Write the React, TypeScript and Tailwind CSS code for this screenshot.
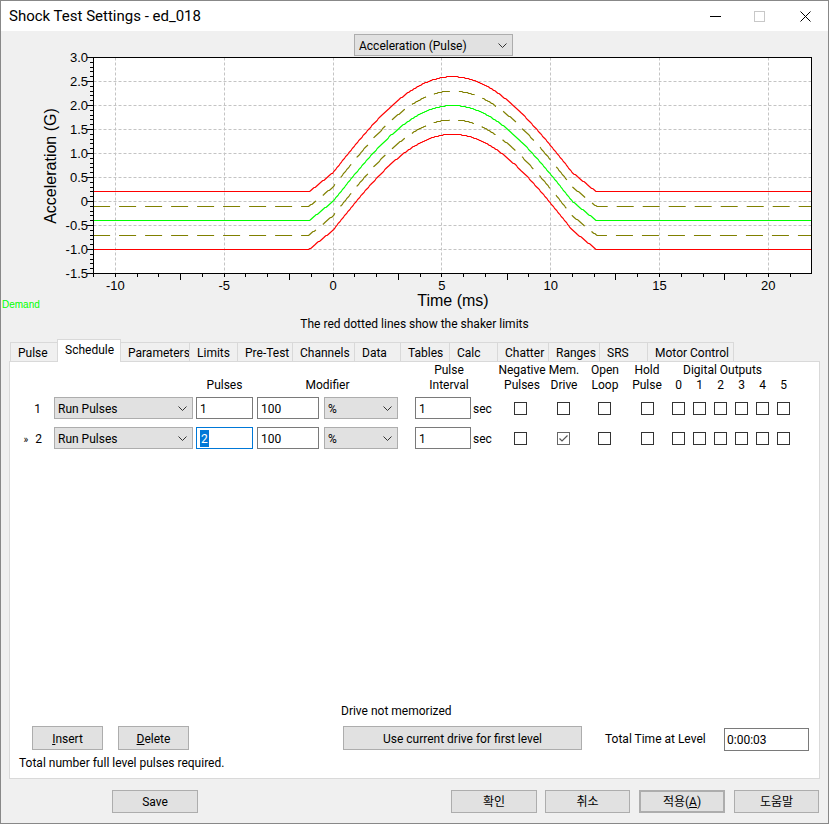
import React from 'react';

// chart geometry, in page pixels
const X = (t: number) => 333 + 21.767 * t;
const Y = (g: number) => 201.5 - 48 * g;
const snap = (v: number) => Math.round(v - 0.5) + 0.5;
const T0 = -11.02;
const T1 = 21.98;

const demand = (t: number) => {
  if (t <= -1.1) return -0.4;
  if (t < 0) return -0.4 + (0.4 * (t + 1.1)) / 1.1;
  if (t <= 11) return 2 * Math.sin((Math.PI * t) / 11);
  if (t < 12.1) return -(0.4 * (t - 11)) / 1.1;
  return -0.4;
};

const curve = (off: number) => {
  const pts: string[] = [];
  for (let t = T0; t <= T1 + 0.001; t += 0.05) {
    pts.push(`${X(t).toFixed(1)},${snap(Y(demand(t) + off))}`);
  }
  return 'M' + pts.join(' L');
};

const yTicks = [3, 2.5, 2, 1.5, 1, 0.5, 0, -0.5, -1, -1.5];
const xTicks = [-10, -5, 0, 5, 10, 15, 20];

function Chart() {
  const left = 93.5;
  const right = 811.5;
  const top = 57.5;
  const bottom = 273.5;
  const minorY: number[] = [];
  for (let i = 0; i <= 45; i++) minorY.push(snap(top + i * 4.8));
  const minorX: number[] = [];
  for (let t = -11; t <= 21; t++) minorX.push(snap(X(t)));

  return (
    <svg width={827} height={259} viewBox="1 56 827 259" className="block overflow-visible">
      <rect x={left} y={top} width={right - left} height={bottom - top} fill="#fff" />
      {yTicks.slice(1, -1).map((g) => (
        <line key={g} x1={left} x2={right} y1={snap(Y(g))} y2={snap(Y(g))} stroke="#c4c4c4" strokeDasharray="3 2" />
      ))}
      {xTicks.map((t) => (
        <line key={t} x1={snap(X(t))} x2={snap(X(t))} y1={top} y2={bottom} stroke="#c4c4c4" strokeDasharray="3 2" />
      ))}
      <g fill="none" strokeWidth={1.15}>
        <path d={curve(0.3)} stroke="#808000" strokeDasharray="17 9" />
        <path d={curve(-0.3)} stroke="#808000" strokeDasharray="17 9" />
        <path d={curve(0)} stroke="#00ff00" />
        <path d={curve(0.6)} stroke="#ff0000" />
        <path d={curve(-0.6)} stroke="#ff0000" />
      </g>
      <rect x={left} y={top} width={right - left} height={bottom - top} fill="none" stroke="#000" />
      {minorY.map((y, i) => (
        <line key={i} x1={i % 5 === 0 ? 87 : 90} x2={left} y1={y} y2={y} stroke="#000" />
      ))}
      {minorX.map((x, i) => (
        <line key={i} x1={x} x2={x} y1={bottom} y2={(i + 1) % 5 === 0 ? 280 : 277} stroke="#000" />
      ))}
      <g fontFamily="'Liberation Sans', Arial, sans-serif" fontSize={13} fill="#000">
        {yTicks.map((g) => (
          <text key={g} x={88} y={Y(g) + 4.5} textAnchor="end">
            {g === 0 ? '0' : g.toFixed(1)}
          </text>
        ))}
        {xTicks.map((t) => (
          <text key={t} x={X(t)} y={290} textAnchor="middle">
            {t}
          </text>
        ))}
        <text x={453} y={305.5} textAnchor="middle" fontSize={16}>
          Time (ms)
        </text>
        <text transform="translate(56,166) rotate(-90)" textAnchor="middle" fontSize={16}>
          Acceleration (G)
        </text>
        <text x={2} y={307.5} fontSize={10} fill="#00ff00">
          Demand
        </text>
      </g>
    </svg>
  );
}

function Chevron() {
  return (
    <svg width="9" height="5" viewBox="0 0 9 5" className="shrink-0 -mt-[2px]">
      <polyline points="0.5,0.5 4.5,4.5 8.5,0.5" fill="none" stroke="#333" strokeWidth="1" />
    </svg>
  );
}

function Select({ value, className }: { value: string; className: string }) {
  return (
    <div className={`h-[22px] bg-[#e1e1e1] border border-[#adadad] flex items-center pt-[2px] pl-[3px] pr-[5px] justify-between ${className}`}>
      <span>{value}</span>
      <Chevron />
    </div>
  );
}

function Input({ value, className }: { value: string; className: string }) {
  return (
    <div className={`h-[22px] bg-white border border-[#7a7a7a] flex items-center pt-[2px] pl-[3px] ${className}`}>
      {value}
    </div>
  );
}

function Check({ checked, className = '' }: { checked?: boolean; className?: string }) {
  return (
    <div className={`w-[13px] h-[13px] border bg-white shrink-0 ${checked ? 'border-[#666]' : 'border-[#333]'} ${className}`}>
      {checked && (
        <svg width="11" height="11" viewBox="0 0 11 11">
          <polyline points="1.5,5.5 4,8 9.5,2.5" fill="none" stroke="#555" strokeWidth="1.2" />
        </svg>
      )}
    </div>
  );
}

function CheckRow({ mem }: { mem?: boolean }) {
  return (
    <>
      <Check />
      <Check checked={mem} className="ml-[30px]" />
      <Check className="ml-[28px]" />
      <Check className="ml-[30px]" />
      <Check className="ml-[18px]" />
      <Check className="ml-[8px]" />
      <Check className="ml-[8px]" />
      <Check className="ml-[8px]" />
      <Check className="ml-[8px]" />
      <Check className="ml-[8px]" />
    </>
  );
}

const tabs = [
  { name: 'Pulse', w: 'w-[47px]' },
  { name: 'Schedule', w: 'w-[64px]', active: true },
  { name: 'Parameters', w: 'w-[69px]' },
  { name: 'Limits', w: 'w-[48px]' },
  { name: 'Pre-Test', w: 'w-[55px]' },
  { name: 'Channels', w: 'w-[62px]' },
  { name: 'Data', w: 'w-[46px]' },
  { name: 'Tables', w: 'w-[49px]' },
  { name: 'Calc', w: 'w-[48px]' },
  { name: 'Chatter', w: 'w-[51px]' },
  { name: 'Ranges', w: 'w-[51px]' },
  { name: 'SRS', w: 'w-[48px]' },
  { name: 'Motor Control', w: 'w-[87px]', last: true },
];

const btn = 'h-[23px] bg-[#e1e1e1] border border-[#adadad] flex items-center justify-center pt-[2px]';

export default function App() {
  return (
    <div className="w-[829px] h-[824px] border border-[#888] bg-[#f0f0f0] flex flex-col overflow-hidden text-[12px] text-black font-['Roboto','Noto_Sans_CJK_KR',sans-serif] leading-[15px]">
      {/* title bar */}
      <div className="h-[30px] bg-white flex items-center shrink-0">
        <span className="pl-[8px] text-[15px]">Shock Test Settings - ed_018</span>
        <div className="ml-auto flex items-center">
          <svg width="11" height="11" viewBox="0 0 11 11" className="mr-[33px]">
            <line x1="0" x2="11" y1="5.5" y2="5.5" stroke="#000" />
          </svg>
          <svg width="11" height="11" viewBox="0 0 11 11" className="mr-[35px]">
            <rect x="0.5" y="0.5" width="10" height="10" fill="none" stroke="#c8c8c8" />
          </svg>
          <svg width="11" height="11" viewBox="0 0 11 11" className="mr-[17px]">
            <path d="M0.5 0.5 L10.5 10.5 M10.5 0.5 L0.5 10.5" stroke="#000" strokeWidth="1" />
          </svg>
        </div>
      </div>

      {/* graph type */}
      <Select value="Acceleration (Pulse)" className="mt-[3px] ml-[353px] w-[159px] pl-[4px]" />

      <Chart />

      <div className="h-[16px] pt-px leading-[16px] text-center">The red dotted lines show the shaker limits</div>

      {/* tabs */}
      <div className="mt-[8px] h-[22px] flex items-end pl-[9px]">
        {tabs.map((t) =>
          t.active ? (
            <div key={t.name} className={`${t.w} h-[23px] -mb-px -mr-px relative z-10 bg-white border-x border-t border-[#d9d9d9] pl-[7px] pt-[3px]`}>
              {t.name}
            </div>
          ) : (
            <div
              key={t.name}
              className={`${t.w} h-[19px] border-l border-t ${t.last ? 'border-r' : ''} border-[#d9d9d9] bg-[#f0f0f0] pl-[7px] pt-[3px] whitespace-nowrap`}
            >
              {t.name}
            </div>
          )
        )}
      </div>

      {/* schedule panel */}
      <div className="ml-[8px] w-[811px] h-[418px] border border-[#d9d9d9] bg-white flex flex-col">
        {/* column headers */}
        <div className="flex pt-px">
          <div className="ml-[186px] w-[57px] flex flex-col items-center">
            <div className="h-[15px]" />
            <div className="whitespace-nowrap">Pulses</div>
          </div>
          <div className="ml-[4px] w-[141px] flex flex-col items-center">
            <div className="h-[15px]" />
            <div className="whitespace-nowrap">Modifier</div>
          </div>
          <div className="ml-[17px] w-[68px] flex flex-col items-center whitespace-nowrap">
            <div>Pulse</div>
            <div>Interval</div>
          </div>
          <div className="ml-[19px] w-[40px] flex flex-col items-center whitespace-nowrap">
            <div>Negative</div>
            <div>Pulses</div>
          </div>
          <div className="ml-[2px] w-[40px] flex flex-col items-center whitespace-nowrap">
            <div>Mem.</div>
            <div>Drive</div>
          </div>
          <div className="ml-[1px] w-[40px] flex flex-col items-center whitespace-nowrap">
            <div>Open</div>
            <div>Loop</div>
          </div>
          <div className="ml-[2px] w-[40px] flex flex-col items-center whitespace-nowrap">
            <div>Hold</div>
            <div>Pulse</div>
          </div>
          <div className="ml-[1px] w-[126px] flex flex-col">
            <div className="pl-[15px] whitespace-nowrap">Digital Outputs</div>
            <div className="flex">
              {['0', '1', '2', '3', '4', '5'].map((d) => (
                <div key={d} className="w-[21px] text-center">
                  {d}
                </div>
              ))}
            </div>
          </div>
        </div>

        {/* row 1 */}
        <div className="mt-[4px] flex items-center">
          <div className="w-[44px] text-right pr-[13px] pt-[2px]">1</div>
          <Select value="Run Pulses" className="w-[139px]" />
          <Input value="1" className="ml-[3px] w-[57px]" />
          <Input value="100" className="ml-[4px] w-[62px]" />
          <Select value="%" className="ml-[5px] w-[74px]" />
          <Input value="1" className="ml-[17px] w-[56px]" />
          <div className="ml-[2px] w-[41px] pt-[2px]">sec</div>
          <CheckRow />
        </div>

        {/* row 2 */}
        <div className="mt-[8px] flex items-center">
          <div className="w-[44px] text-right pr-[12px] pt-[2px] whitespace-nowrap">
            <span className="text-[10px] mr-[7px]">»</span>2
          </div>
          <Select value="Run Pulses" className="w-[139px]" />
          <div className="ml-[3px] w-[57px] h-[22px] bg-white border border-[#0078d7] flex items-center pl-[3px]">
            <span className="bg-[#0078d7] text-white leading-[16px] pt-px px-px">2</span>
          </div>
          <Input value="100" className="ml-[4px] w-[62px]" />
          <Select value="%" className="ml-[5px] w-[74px]" />
          <Input value="1" className="ml-[17px] w-[56px]" />
          <div className="ml-[2px] w-[41px] pt-[2px]">sec</div>
          <CheckRow mem />
        </div>

        {/* footer of the panel */}
        <div className="mt-auto pb-[7px] flex flex-col">
          <div className="ml-[331px] pt-px">Drive not memorized</div>
          <div className="mt-[7px] flex items-start">
            <div className={`${btn} h-[24px] ml-[22px] w-[71px]`}>
              <span>
                <span className="underline">I</span>nsert
              </span>
            </div>
            <div className={`${btn} h-[24px] ml-[15px] w-[71px]`}>
              <span>
                <span className="underline">D</span>elete
              </span>
            </div>
            <div className={`${btn} h-[24px] ml-[154px] w-[239px]`}>Use current drive for first level</div>
            <div className="ml-[23px] w-[119px] h-[24px] pt-[2px] flex items-center">Total Time at Level</div>
            <div className="mt-[2px] w-[85px] h-[23px] border border-[#7a7a7a] flex items-center pt-[2px] pl-[2px]">0:00:03</div>
          </div>
          <div className="mt-[4px] ml-[9px] pt-px">Total number full level pulses required.</div>
        </div>
      </div>

      {/* dialog buttons */}
      <div className="mt-[11px] flex">
        <div className={`${btn} ml-[111px] w-[86px]`}>Save</div>
        <div className={`${btn} ml-[253px] w-[86px]`}>확인</div>
        <div className={`${btn} ml-[8px] w-[85px]`}>취소</div>
        <div className={`${btn} ml-[9px] w-[86px] border-2 border-[#0078d7]`}>
          <span>
            적용(<span className="underline">A</span>)
          </span>
        </div>
        <div className={`${btn} ml-[9px] w-[85px]`}>도움말</div>
      </div>
    </div>
  );
}
